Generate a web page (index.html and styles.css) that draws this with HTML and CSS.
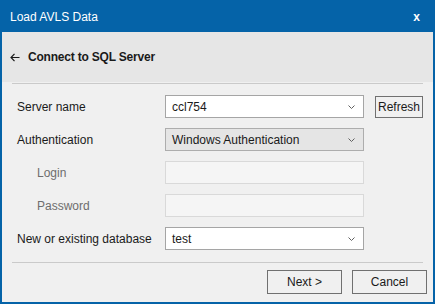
FILE: index.html
```html
<!DOCTYPE html>
<html>
<head>
<meta charset="utf-8">
<link rel="stylesheet" href="styles.css">
</head>
<body>
<div class="window">
  <div class="titlebar">
    <span class="title">Load AVLS Data</span>
    <span class="close">x</span>
  </div>
  <div class="client">
    <div class="header">
      <svg class="back" width="10" height="9" viewBox="0 0 10 9"><path d="M4.5 0.8 L1 4.5 L4.5 8.2 M1 4.5 H9.5" fill="none" stroke="#1a1a1a" stroke-width="1.2"/></svg>
      <span class="heading">Connect to SQL Server</span>
    </div>
    <div class="sep top-sep"></div>
    <div class="form">
      <label class="lbl">Server name</label>
      <div class="combo edit"><span>ccl754</span><svg class="chev" width="7" height="4" viewBox="0 0 7 4"><path d="M0.5 0.5 L3.5 3.5 L6.5 0.5" fill="none" stroke="#606060" stroke-width="1"/></svg></div>
      <button class="btn refresh">Refresh</button>

      <label class="lbl">Authentication</label>
      <div class="combo list"><span>Windows Authentication</span><svg class="chev" width="7" height="4" viewBox="0 0 7 4"><path d="M0.5 0.5 L3.5 3.5 L6.5 0.5" fill="none" stroke="#606060" stroke-width="1"/></svg></div>
      <div></div>

      <label class="lbl sub">Login</label>
      <div class="textbox disabled"></div>
      <div></div>

      <label class="lbl sub">Password</label>
      <div class="textbox disabled"></div>
      <div></div>

      <label class="lbl">New or existing database</label>
      <div class="combo edit"><span>test</span><svg class="chev" width="7" height="4" viewBox="0 0 7 4"><path d="M0.5 0.5 L3.5 3.5 L6.5 0.5" fill="none" stroke="#606060" stroke-width="1"/></svg></div>
      <div></div>
    </div>
    <div class="sep bottom-sep"></div>
    <div class="footer">
      <button class="btn action">Next &gt;</button>
      <button class="btn action">Cancel</button>
    </div>
  </div>
</div>
</body>
</html>
```

FILE: styles.css
```css
* { box-sizing: border-box; }
html, body { margin: 0; padding: 0; }
body {
  font-family: "Liberation Sans", Arial, sans-serif;
  font-size: 12px;
  color: #1a1a1a;
}
.window {
  width: 435px;
  height: 304px;
  background: #0563a8;
  display: flex;
  flex-direction: column;
}
.titlebar {
  height: 32px;
  display: flex;
  align-items: center;
  justify-content: space-between;
  padding: 1px 15px 0 10px;
  color: #ffffff;
}
.title { font-size: 12px; }
.close { font-size: 12px; font-weight: bold; }
.client {
  flex: 1;
  margin: 0 2px 2px 2px;
  background: #f0f0f0;
  display: flex;
  flex-direction: column;
}
.header {
  height: 50px;
  background: #e6e6e6;
  display: flex;
  align-items: center;
  padding-left: 8px;
  gap: 8px;
}
.heading { font-weight: bold; font-size: 12px; letter-spacing: -0.2px; }
.sep {
  height: 1px;
  background: #cacaca;
  margin: 0 10px;
}
.top-sep { margin-top: 1px; }
.form {
  display: grid;
  grid-template-columns: 148px 199px 59px;
  grid-auto-rows: 23px;
  row-gap: 10px;
  padding: 11px 0 0 15px;
}
.lbl {
  display: flex;
  align-items: center;
}
.lbl.sub { padding-left: 20px; color: #6d6d6d; }
.combo, .textbox {
  border: 1px solid #acacac;
  display: flex;
  align-items: center;
  justify-content: space-between;
  padding: 0 8px 0 6px;
}
.combo.edit { background: #ffffff; border-color: #a5a5a5; }
.combo.list { background: #e5e5e5; border-color: #adadad; }
.textbox.disabled { background: #f5f5f5; border-color: #d9d9d9; }
.btn {
  font-family: inherit;
  font-size: 12px;
  color: #1a1a1a;
  background: #e1e1e1;
  border: 1px solid #adadad;
  padding: 0;
  margin: 0;
}
.refresh {
  width: 48px;
  height: 22px;
  margin: 1px 0 0 11px;
  background: #f0f0f0;
  border-color: #707070;
}
.bottom-sep { margin-top: 12px; }
.footer {
  display: flex;
  justify-content: flex-end;
  gap: 10px;
  padding: 7px 6px 0 0;
}
.action { width: 75px; height: 24px; background: #f0f0f0; border-color: #707070; }
```
